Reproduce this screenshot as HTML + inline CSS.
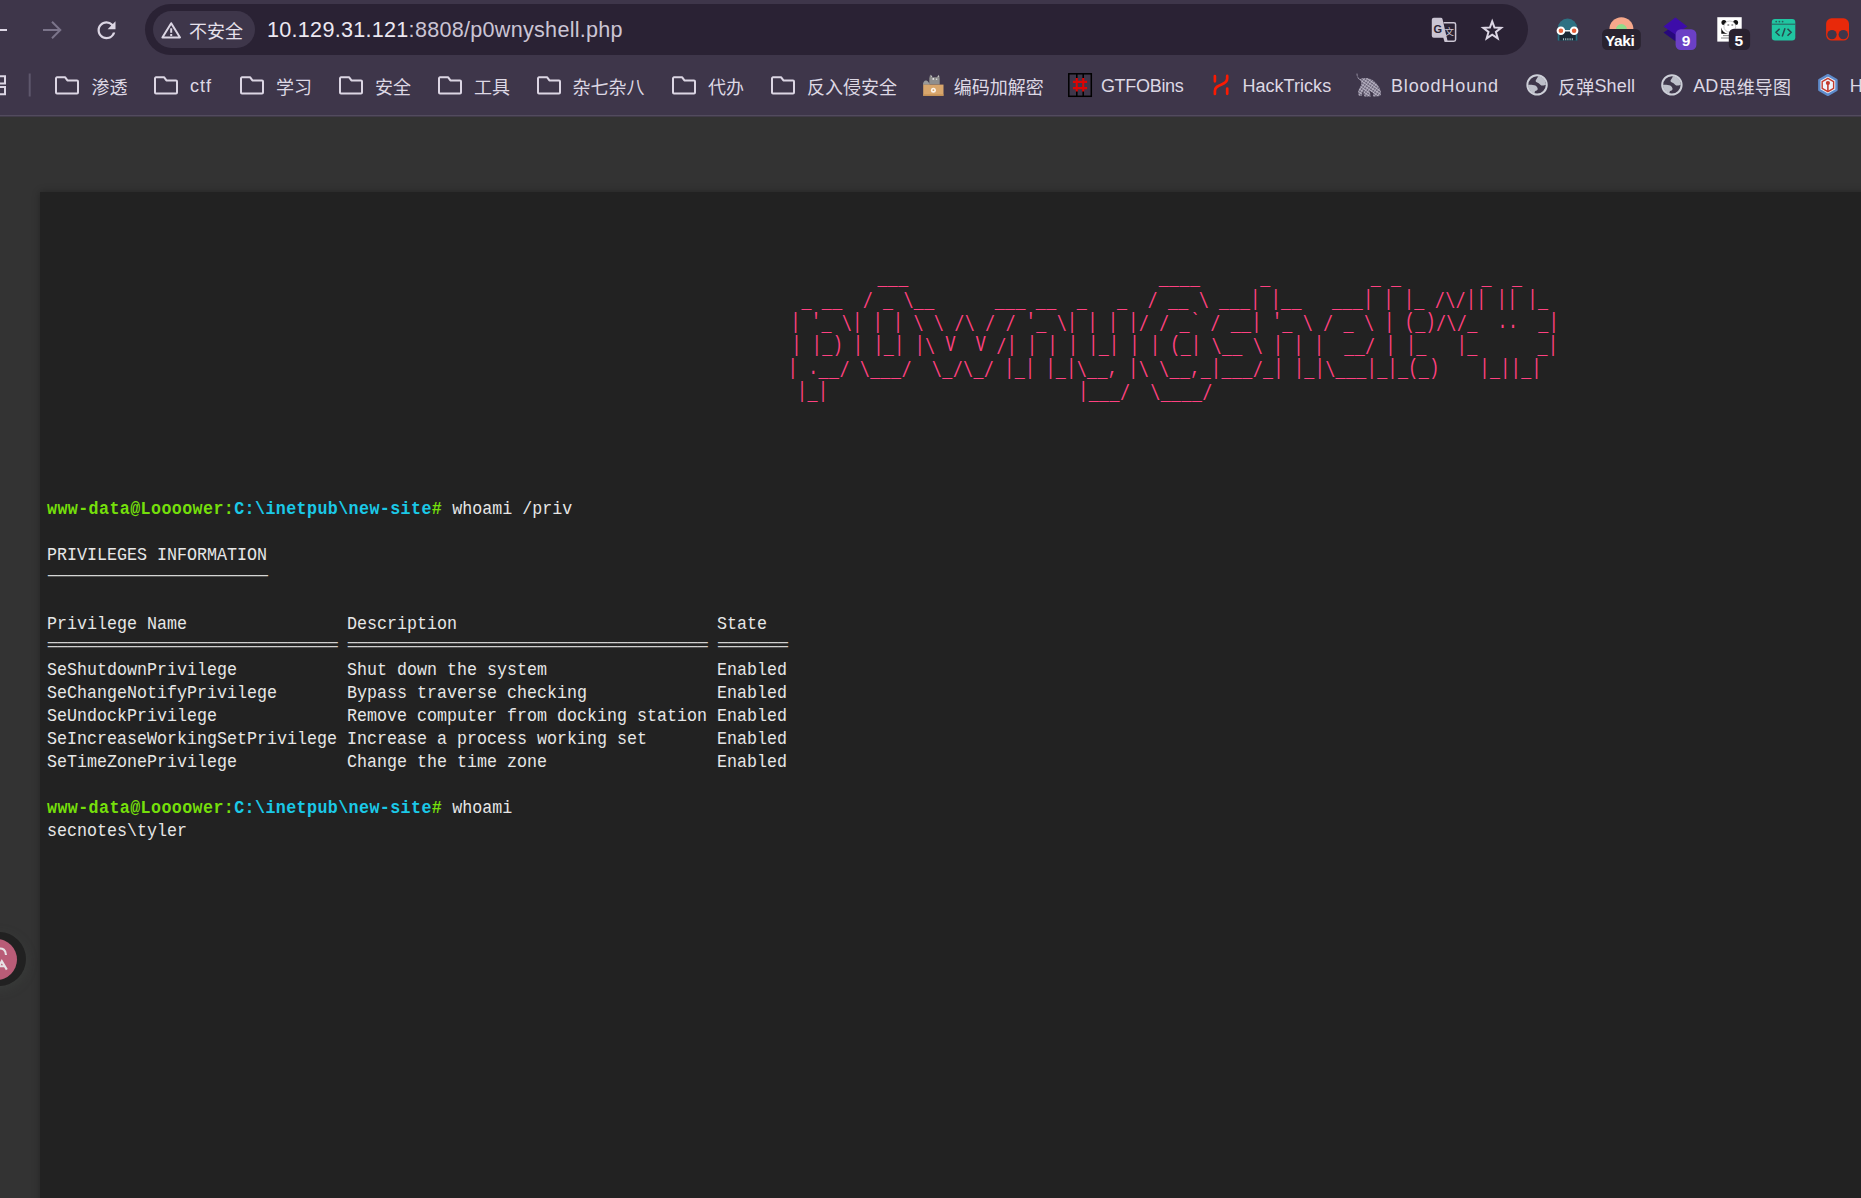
<!DOCTYPE html>
<html lang="zh-CN">
<head>
<meta charset="utf-8">
<title>p0wnyshell</title>
<style>
html,body{margin:0;padding:0;}
body{width:1861px;height:1198px;overflow:hidden;background:#333;position:relative;font-family:"Liberation Sans","Noto Sans CJK SC",sans-serif;}
#chrome{position:absolute;left:0;top:0;width:1861px;height:115px;background:#3e364a;border-bottom:1px solid #524b5e;box-shadow:0 1px 0 #413b49;box-sizing:content-box;}
#pill{position:absolute;left:145px;top:4px;width:1383px;height:51px;border-radius:26px;background:#2a2234;}
#chip{position:absolute;left:152.5px;top:11px;width:102px;height:36.5px;border-radius:18.5px;background:#3e364a;}
.abs{position:absolute;}
#chiptxt{left:189px;top:17px;font-size:18px;line-height:26px;color:#e6e1ec;white-space:nowrap;}
#url{left:267px;top:14.8px;font-size:21.6px;letter-spacing:0.27px;line-height:30px;color:#ece8f1;white-space:nowrap;}
.bm{position:absolute;top:73px;font-size:18px;line-height:26px;color:#ddd8e4;white-space:nowrap;}
.ico{position:absolute;}
.cj{position:relative;top:1.5px;}
#shell{position:absolute;left:40px;top:192px;width:2269px;height:1100px;background:#222;box-shadow:0 0 7.5px rgba(0,0,0,.3);}
.mono{font-family:"Liberation Mono","DejaVu Sans Mono",monospace;font-size:19.0px;line-height:23px;white-space:pre;margin:0;color:#e7e7e7;transform:scaleX(0.87705);transform-origin:0 0;position:absolute;}
.hw{display:inline-block;white-space:pre;vertical-align:baseline;height:23px;overflow:visible;}
.hy{display:inline-block;color:#d6d6d6;letter-spacing:-0.3325em;transform-origin:0 0;transform:translate(calc(-0.36575em + 0.9px),0.9px) scale(2.2427,0.75);}
.eq{display:inline-block;color:#d0d0d0;letter-spacing:-0.12158em;transform-origin:0 0;transform:translate(calc(-0.07103em + 0.9px),-0.35px) scale(1.25408,0.9);}
.b{font-weight:bold;letter-spacing:0.4561px;word-spacing:-0.4561px;}
.u{position:relative;top:2.5px;}
.s{position:relative;top:2.2px;}
.g{color:#75DF0B;}
.c{color:#1BC9E7;}
#logo{color:#FF4180;font-size:22.0px;transform:scaleX(0.75745);letter-spacing:0.5281px;word-spacing:-0.5281px;}
</style>
</head>
<body>
<div id="chrome">
<div id="pill"></div>
<div id="chip"></div>
<div id="chiptxt" class="abs"><span class="cj">不安全</span></div>
<div id="url" class="abs">10.129.31.121<span style="color:#cbc5d4">:8808/p0wnyshell.php</span></div>
<svg class="ico" style="left:55px;top:76px" width="24" height="18.5" viewBox="0 0 24 18.5"><path d="M2 1.3H10.2L12.4 4.4H22a1 1 0 0 1 1 1V16.6a1 1 0 0 1-1 1H2a1 1 0 0 1-1-1V2.3a1 1 0 0 1 1-1z" fill="none" stroke="#dcd6e4" stroke-width="2" stroke-linejoin="round"/></svg>
<div class="bm" style="left:91.5px;"><span class="cj">渗透</span></div>
<svg class="ico" style="left:154px;top:76px" width="24" height="18.5" viewBox="0 0 24 18.5"><path d="M2 1.3H10.2L12.4 4.4H22a1 1 0 0 1 1 1V16.6a1 1 0 0 1-1 1H2a1 1 0 0 1-1-1V2.3a1 1 0 0 1 1-1z" fill="none" stroke="#dcd6e4" stroke-width="2" stroke-linejoin="round"/></svg>
<div class="bm" style="left:190px;letter-spacing:1.0px;">ctf</div>
<svg class="ico" style="left:240px;top:76px" width="24" height="18.5" viewBox="0 0 24 18.5"><path d="M2 1.3H10.2L12.4 4.4H22a1 1 0 0 1 1 1V16.6a1 1 0 0 1-1 1H2a1 1 0 0 1-1-1V2.3a1 1 0 0 1 1-1z" fill="none" stroke="#dcd6e4" stroke-width="2" stroke-linejoin="round"/></svg>
<div class="bm" style="left:276px;"><span class="cj">学习</span></div>
<svg class="ico" style="left:339px;top:76px" width="24" height="18.5" viewBox="0 0 24 18.5"><path d="M2 1.3H10.2L12.4 4.4H22a1 1 0 0 1 1 1V16.6a1 1 0 0 1-1 1H2a1 1 0 0 1-1-1V2.3a1 1 0 0 1 1-1z" fill="none" stroke="#dcd6e4" stroke-width="2" stroke-linejoin="round"/></svg>
<div class="bm" style="left:375px;"><span class="cj">安全</span></div>
<svg class="ico" style="left:438px;top:76px" width="24" height="18.5" viewBox="0 0 24 18.5"><path d="M2 1.3H10.2L12.4 4.4H22a1 1 0 0 1 1 1V16.6a1 1 0 0 1-1 1H2a1 1 0 0 1-1-1V2.3a1 1 0 0 1 1-1z" fill="none" stroke="#dcd6e4" stroke-width="2" stroke-linejoin="round"/></svg>
<div class="bm" style="left:474px;"><span class="cj">工具</span></div>
<svg class="ico" style="left:537px;top:76px" width="24" height="18.5" viewBox="0 0 24 18.5"><path d="M2 1.3H10.2L12.4 4.4H22a1 1 0 0 1 1 1V16.6a1 1 0 0 1-1 1H2a1 1 0 0 1-1-1V2.3a1 1 0 0 1 1-1z" fill="none" stroke="#dcd6e4" stroke-width="2" stroke-linejoin="round"/></svg>
<div class="bm" style="left:572.5px;"><span class="cj">杂七杂八</span></div>
<svg class="ico" style="left:672px;top:76px" width="24" height="18.5" viewBox="0 0 24 18.5"><path d="M2 1.3H10.2L12.4 4.4H22a1 1 0 0 1 1 1V16.6a1 1 0 0 1-1 1H2a1 1 0 0 1-1-1V2.3a1 1 0 0 1 1-1z" fill="none" stroke="#dcd6e4" stroke-width="2" stroke-linejoin="round"/></svg>
<div class="bm" style="left:708px;"><span class="cj">代办</span></div>
<svg class="ico" style="left:771px;top:76px" width="24" height="18.5" viewBox="0 0 24 18.5"><path d="M2 1.3H10.2L12.4 4.4H22a1 1 0 0 1 1 1V16.6a1 1 0 0 1-1 1H2a1 1 0 0 1-1-1V2.3a1 1 0 0 1 1-1z" fill="none" stroke="#dcd6e4" stroke-width="2" stroke-linejoin="round"/></svg>
<div class="bm" style="left:807px;"><span class="cj">反入侵安全</span></div>
<div class="bm" style="left:953.8px;"><span class="cj">编码加解密</span></div>
<div class="bm" style="left:1100.9px;letter-spacing:-0.3px;">GTFOBins</div>
<div class="bm" style="left:1242.4px;letter-spacing:0.05px;">HackTricks</div>
<div class="bm" style="left:1390.9px;letter-spacing:0.9px;">BloodHound</div>
<div class="bm" style="left:1558.1px;letter-spacing:0.15px;"><span class="cj">反弹</span>Shell</div>
<div class="bm" style="left:1693.2px;letter-spacing:0.15px;">AD<span class="cj">思维导图</span></div>
<div class="bm" style="left:1849.8px;">H</div>
<!--BM-ICONS-->
<svg class="abs" style="left:0;top:0" width="1861" height="117" viewBox="0 0 1861 117" font-family="Liberation Sans, Noto Sans CJK SC, sans-serif">
<!-- nav -->
<path d="M0 30H7" stroke="#dcd6e4" stroke-width="2" fill="none"/>
<path d="M43 30H60M52 21.8L60.3 30L52 38.2" stroke="#7b748a" stroke-width="2" fill="none" stroke-linejoin="miter"/>
<g transform="translate(93 16.8) scale(1.125)"><path fill="#dcd6e4" d="M17.65 6.35A7.95 7.95 0 0 0 12 4C7.58 4 4.01 7.58 4.01 12S7.58 20 12 20c3.73 0 6.84-2.55 7.73-6h-2.08A5.99 5.99 0 0 1 12 18c-3.31 0-6-2.69-6-6s2.69-6 6-6c1.66 0 3.14.69 4.22 1.78L13 11h7V4l-2.35 2.35z"/></g>
<!-- warning -->
<path d="M171.2 23.2L180 37.5H162.4Z" fill="none" stroke="#dcd6e4" stroke-width="2" stroke-linejoin="round"/>
<path d="M171.2 28.3V32.8" stroke="#dcd6e4" stroke-width="2"/><rect x="170.2" y="34" width="2" height="2" fill="#dcd6e4"/>
<!-- translate -->
<path d="M1443.6 22.7H1453.9a1.7 1.7 0 0 1 1.7 1.7V39.5a1.7 1.7 0 0 1-1.7 1.7H1447" fill="none" stroke="#cbc5d3" stroke-width="1.5"/>
<path d="M1433.8 17.7H1440.9a1.7 1.7 0 0 1 1.6 1.3L1447.8 41.9H1444.6L1443.3 37.7H1433.8a2 2 0 0 1-2-2V19.7a2 2 0 0 1 2-2Z" fill="#cbc5d3"/>
<text x="1433.5" y="33.1" font-size="11" font-weight="bold" fill="#2a2234">G</text>
<text x="1444.4" y="34.8" font-size="9.5" fill="#cbc5d3">文</text>
<!-- star -->
<polygon points="1492.20,21.30 1494.49,27.54 1501.14,27.80 1495.91,31.91 1497.73,38.30 1492.20,34.60 1486.67,38.30 1488.49,31.91 1483.26,27.80 1489.91,27.54" fill="none" stroke="#dcd6e4" stroke-width="2" stroke-linejoin="miter"/>
<!-- robot -->
<path d="M1557.8 40.5V28.3a9.75 9.75 0 0 1 19.5 0V40.5Z" fill="#2d7183"/>
<path d="M1557.8 40.5V31h19.5V40.5Z" fill="#1c2a36"/>
<path d="M1557.8 40.5V33h1.6v7.5zM1575.7 40.5V33h1.6v7.5z" fill="#2d7183"/>
<path d="M1565 30.8H1570" stroke="#fff" stroke-width="1.4"/>
<circle cx="1560.9" cy="30.8" r="3.3" fill="#e8623a" stroke="#fff" stroke-width="2"/>
<circle cx="1574.1" cy="30.8" r="3.3" fill="#e8623a" stroke="#fff" stroke-width="2"/>
<path d="M1563.5 38.2v2M1565.7 38.2v2M1567.9 38.2v2M1570.1 38.2v2M1572.3 38.2v2" stroke="#9fb9c2" stroke-width="1.1"/>
<!-- yaki -->
<circle cx="1621.4" cy="29.3" r="12" fill="#f6a88b"/>
<circle cx="1621.4" cy="29.6" r="5.6" fill="#8edc8a"/>
<rect x="1602.1" y="28.9" width="38.7" height="21.2" rx="5.2" fill="#29222f"/>
<text x="1604.9" y="45.6" font-size="15.5" font-weight="bold" fill="#fff" letter-spacing="-0.35">Yaki</text>
<!-- purple -->
<path d="M1663.5 32.6L1675.4 25L1687.4 32.6L1675.4 41.2Z" fill="#27087c"/>
<path d="M1663.5 26.6L1675.4 17.5L1687.4 26.6L1675.4 34.6Z" fill="#3d0ca9"/>
<rect x="1675.6" y="29.3" width="20.8" height="20.8" rx="5.2" fill="#6b40c5"/>
<text x="1686" y="46" font-size="15.5" font-weight="bold" fill="#fff" text-anchor="middle">9</text>
<!-- panda -->
<rect x="1717.3" y="17.2" width="24.4" height="24.4" fill="#fff"/>
<circle cx="1723.9" cy="22.4" r="2.5" fill="#111"/><circle cx="1735.6" cy="22.4" r="2.5" fill="#111"/>
<ellipse cx="1729.8" cy="26.6" rx="5.9" ry="5.6" fill="#fff" stroke="#bbb" stroke-width="0.8"/>
<circle cx="1728.3" cy="25" r="1.1" fill="#999"/><circle cx="1732.3" cy="25" r="1.1" fill="#999"/>
<path d="M1721.3 27.5c0.8 3.6 3 5.6 6.6 6.2h-6.6z" fill="#111"/>
<path d="M1723 35.6h8M1721 38h10" stroke="#888" stroke-width="1"/>
<rect x="1728.8" y="28.7" width="21.3" height="21.4" rx="5.2" fill="#29222f"/>
<text x="1738.9" y="45.8" font-size="15.5" font-weight="bold" fill="#fff" text-anchor="middle">5</text>
<!-- teal window -->
<rect x="1771.8" y="18.9" width="23.5" height="21.5" rx="3.2" fill="#20c5a1"/>
<path d="M1771.8 24.2H1795.3" stroke="#2b5d5c" stroke-width="1"/>
<circle cx="1776.2" cy="21.6" r="0.9" fill="#2b5d5c"/><circle cx="1779.4" cy="21.6" r="0.9" fill="#2b5d5c"/><circle cx="1782.6" cy="21.6" r="0.9" fill="#2b5d5c"/>
<path d="M1779.6 28.8L1776 32.3L1779.6 35.8M1787.5 28.8L1791.1 32.3L1787.5 35.8M1785 28.2L1782.2 36.4" stroke="#28494d" stroke-width="1.5" fill="none"/>
<!-- red -->
<rect x="1826.1" y="18.3" width="22.9" height="22.3" rx="5.5" fill="#e8290a"/>
<circle cx="1832" cy="34.6" r="4.7" fill="#3e364a"/>
<circle cx="1843.3" cy="34.6" r="4.7" fill="#3e364a"/>
<!-- bookmarks bar misc -->
<path d="M-3 76.2H5V83.4H-3M-3 87H5V94.2H-3" fill="none" stroke="#dcd6e4" stroke-width="2"/>
<path d="M29.7 73.5V96.5" stroke="#5e576c" stroke-width="2"/>
<defs><pattern id="mesh" width="2.6" height="2.6" patternUnits="userSpaceOnUse" patternTransform="rotate(35)"><rect width="2.6" height="2.6" fill="#6e687c"/><path d="M0 0H2.6M0 0V2.6" stroke="#c9c4d3" stroke-width="1.1"/></pattern></defs>
<!-- cat box -->
<path d="M929.3 84.6V78.2L930.2 74.6L932.2 77.2H936.6L938.9 74.8L939.7 78.6V84.6Z" fill="#8e8e8e"/>
<path d="M923 84.8C923 82 924.5 80.2 926.4 80.6C928 81 928.6 82.6 929.6 83.6V84.8Z" fill="#9a9a9a"/>
<path d="M930.9 76.4l0.6-1.2 0.9 1.6zM938.2 76.4l0.6-1.2 0.4 1.8z" fill="#f4f4f4"/>
<circle cx="933.3" cy="78.9" r="0.9" fill="#eee"/><circle cx="936.6" cy="79.3" r="0.8" fill="#ddd"/>
<rect x="923.2" y="84.6" width="20.3" height="11.2" fill="#d8a66c"/>
<rect x="923.2" y="94.3" width="20.3" height="1.5" fill="#c99558"/>
<circle cx="933.4" cy="90.2" r="2.5" fill="#fbf3ea"/><circle cx="933.4" cy="90.2" r="0.9" fill="#d8a66c"/>
<!-- gtfobins -->
<rect x="1068.8" y="73.8" width="22.5" height="22.5" fill="none" stroke="#000" stroke-width="1.5"/>
<path d="M1076.8 74V96M1083.2 74V96" stroke="#000" stroke-width="1.5"/>
<path d="M1076.8 77.9V91.6M1083.2 77.9V91.6M1072.9 81.8H1087.1M1072.9 88.2H1087.1" stroke="#dd0404" stroke-width="2.2"/>
<!-- hacktricks -->
<path d="M1227.2 75.9V78.6C1227.2 86.2 1214.9 83.2 1214.9 91V94" fill="none" stroke="#fb1a02" stroke-width="2.7" stroke-linecap="round"/>
<path d="M1214.9 76V81.3M1227.2 88.6V93.8" stroke="#fb1a02" stroke-width="2.7" stroke-linecap="round"/>
<!-- bloodhound -->
<path d="M1357.4 73.2C1357.2 76 1357.8 77.6 1360.2 79C1362.5 78 1365 77.6 1368 78.2C1373 79.4 1377 83 1379.2 87.6C1380.4 90 1381.2 92.6 1381 94C1380.8 95.4 1380 96.1 1378.6 96.2L1373.5 96.6C1372.6 95.6 1372.8 94.2 1373.6 93.2C1372 92.4 1370.6 91.6 1369.6 90.6L1370.8 96.4L1364.6 96.6C1363.6 94.8 1363.2 92.4 1363.6 90.2C1362.6 91.4 1362.2 92.8 1362.2 94.4L1361.6 96L1358.8 95.6C1358 93.8 1358 91.6 1358.8 89.6C1359.8 87 1361.2 85.4 1361.4 83.4C1361.5 82 1361 80.8 1360 80C1357.4 78.6 1356.4 76.4 1356.6 73.3Z" fill="url(#mesh)"/>
<!-- globes -->
<g transform="translate(0.00 0.00)"><clipPath id="gc1"><circle cx="1537.05" cy="84.9" r="8.9"/></clipPath>
<g clip-path="url(#gc1)" fill="#bdbfc9"><path d="M1538.4 75.5C1537.6 78 1536 79.6 1535.7 80.6C1535.3 82 1537.4 82.2 1538.7 83.2C1539.8 84.1 1540.6 85.6 1542.6 85.6C1544.6 85.6 1545.6 84.8 1547 84.6V74H1538.4Z"/>
<path d="M1527 84.7C1530 84.6 1533.5 84.5 1535.4 85.5C1537 86.4 1538.2 88.3 1537.5 89.8C1536.8 91 1534.9 90.6 1534.7 92C1534.6 93.3 1535 94.5 1535.2 96H1527Z"/></g>
<circle cx="1537.05" cy="84.9" r="9.7" fill="none" stroke="#cdcfd8" stroke-width="2"/></g>
<g transform="translate(134.85 0.00)"><clipPath id="gc2"><circle cx="1537.05" cy="84.9" r="8.9"/></clipPath>
<g clip-path="url(#gc2)" fill="#bdbfc9"><path d="M1538.4 75.5C1537.6 78 1536 79.6 1535.7 80.6C1535.3 82 1537.4 82.2 1538.7 83.2C1539.8 84.1 1540.6 85.6 1542.6 85.6C1544.6 85.6 1545.6 84.8 1547 84.6V74H1538.4Z"/>
<path d="M1527 84.7C1530 84.6 1533.5 84.5 1535.4 85.5C1537 86.4 1538.2 88.3 1537.5 89.8C1536.8 91 1534.9 90.6 1534.7 92C1534.6 93.3 1535 94.5 1535.2 96H1527Z"/></g>
<circle cx="1537.05" cy="84.9" r="9.7" fill="none" stroke="#cdcfd8" stroke-width="2"/></g>
<!-- hex -->
<polygon points="1827.90,75.10 1836.47,80.05 1836.47,89.95 1827.90,94.90 1819.33,89.95 1819.33,80.05" fill="#eef4fb" stroke="#5e8bcb" stroke-width="2.4" stroke-linejoin="round"/>
<polygon points="1827.90,78.40 1833.62,81.70 1833.62,88.30 1827.90,91.60 1822.18,88.30 1822.18,81.70" fill="none" stroke="#c23b2d" stroke-width="1.4"/>
<circle cx="1827.9" cy="83" r="2.1" fill="#c23b2d"/><path d="M1827.9 83V91.4" stroke="#c23b2d" stroke-width="1.6"/>

</svg>
</div>
<div id="shell"></div>
<pre class="mono" id="logo" style="left:47.5px;top:265.4px;width:2975.5px;text-align:center;">        <span class="u">___</span>                         <span class="u">____</span>      <span class="u">_</span>          <span class="u">_</span> <span class="u">_</span>        <span class="u">_</span>  <span class="u">_</span>   <span></span>
 <span class="u">_</span> <span class="u">__</span>  <span class="s">/</span> <span class="u">_</span> <span class="s">\</span><span class="u">__</span>      <span class="u">___</span> <span class="u">__</span>  <span class="u">_</span>   <span class="u">_</span>  <span class="s">/</span> <span class="u">__</span> <span class="s">\</span> <span class="u">___</span>| |<span class="u">__</span>   <span class="u">___</span>| | |<span class="u">_</span> <span class="s">/\/</span>|| || |<span class="u">_</span> <span></span>
| '<span class="u">_</span> <span class="s">\</span>| | | <span class="s">\</span> <span class="s">\</span> <span class="s">/\</span> <span class="s">/</span> <span class="s">/</span> '<span class="u">_</span> <span class="s">\</span>| | | |<span class="s">/</span> <span class="s">/</span> <span class="u">_</span>` <span class="s">/</span> <span class="u">__</span>| '<span class="u">_</span> <span class="s">\</span> <span class="s">/</span> <span class="u">_</span> <span class="s">\</span> | (<span class="u">_</span>)<span class="s">/\/</span><span class="u">_</span>  ..  <span class="u">_</span>|<span></span>
| |<span class="u">_</span>) | |<span class="u">_</span>| |<span class="s">\</span> V  V <span class="s">/</span>| | | | |<span class="u">_</span>| | | (<span class="u">_</span>| <span class="s">\</span><span class="u">__</span> <span class="s">\</span> | | |  <span class="u">__</span><span class="s">/</span> | |<span class="u">_</span>   |<span class="u">_</span>      <span class="u">_</span>|<span></span>
| .<span class="u">__</span><span class="s">/</span> <span class="s">\</span><span class="u">___</span><span class="s">/</span>  <span class="s">\</span><span class="u">_</span><span class="s">/\</span><span class="u">_</span><span class="s">/</span> |<span class="u">_</span>| |<span class="u">_</span>|<span class="s">\</span><span class="u">__</span>, |<span class="s">\</span> <span class="s">\</span><span class="u">__</span>,<span class="u">_</span>|<span class="u">___</span><span class="s">/</span><span class="u">_</span>| |<span class="u">_</span>|<span class="s">\</span><span class="u">___</span>|<span class="u">_</span>|<span class="u">_</span>(<span class="u">_</span>)    |<span class="u">_</span>||<span class="u">_</span>|  <span></span>
|<span class="u">_</span>|                         |<span class="u">___</span><span class="s">/</span>  <span class="s">\</span><span class="u">____</span><span class="s">/</span>                                  <span></span></pre>
<pre class="mono" id="out" style="left:46.7px;top:497.5px;"><span class="b g">www-data@Loooower:<span class="c">C:\inetpub\new-site</span>#</span> whoami /priv

PRIVILEGES INFORMATION
<span class="hw" style="width:calc(0.60009765em * 22)"><span class="hy">----------------------</span></span>

Privilege Name                Description                          State  
<span class="hw" style="width:calc(0.60009765em * 29)"><span class="eq">=============================</span></span> <span class="hw" style="width:calc(0.60009765em * 36)"><span class="eq">====================================</span></span> <span class="hw" style="width:calc(0.60009765em * 7)"><span class="eq">=======</span></span>
SeShutdownPrivilege           Shut down the system                 Enabled
SeChangeNotifyPrivilege       Bypass traverse checking             Enabled
SeUndockPrivilege             Remove computer from docking station Enabled
SeIncreaseWorkingSetPrivilege Increase a process working set       Enabled
SeTimeZonePrivilege           Change the time zone                 Enabled

<span class="b g">www-data@Loooower:<span class="c">C:\inetpub\new-site</span>#</span> whoami
secnotes\tyler</pre>

<div class="abs" style="left:-28px;top:932px;width:54px;height:54px;border-radius:50%;background:#212121;box-shadow:0 3px 12px rgba(70,80,75,.32);"></div>
<div class="abs" style="left:-24.5px;top:938.5px;width:41px;height:41px;border-radius:50%;background:#b95c77;"></div>
<svg class="abs" style="left:0;top:944px" width="16" height="30" viewBox="0 0 16 30"><path d="M-2 4.6Q5.6 3.4 6 11M-3 25.6L1.8 17.2L6.8 25.6M-1 22.3H5.2" fill="none" stroke="#e6e2e5" stroke-width="2.1"/></svg>

</body>
</html>
